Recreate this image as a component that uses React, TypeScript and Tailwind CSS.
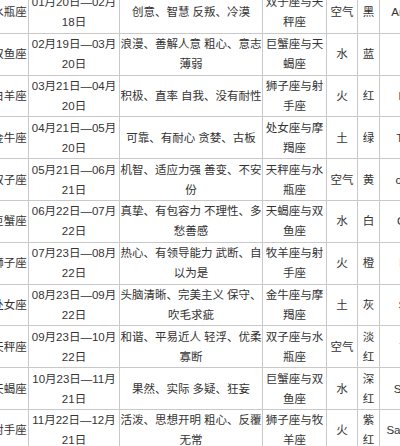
const rows: string[][][] = [
  [["水瓶座"], ["01月20日—02月", "18日"], ["创意、智慧 反叛、冷漠"], ["双子座与天", "秤座"], ["空气"], ["黑"], ["Amethyst Jet"]],
  [["双鱼座"], ["02月19日—03月", "20日"], ["浪漫、善解人意 粗心、意志", "薄弱"], ["巨蟹座与天", "蝎座"], ["水"], ["蓝"], ["Emeralds"]],
  [["白羊座"], ["03月21日—04月", "20日"], ["积极、直率 自我、没有耐性"], ["狮子座与射", "手座"], ["火"], ["红"], ["Diamonds"]],
  [["金牛座"], ["04月21日—05月", "20日"], ["可靠、有耐心 贪婪、古板"], ["处女座与摩", "羯座"], ["土"], ["绿"], ["Turquoises"]],
  [["双子座"], ["05月21日—06月", "21日"], ["机智、适应力强 善变、不安", "份"], ["天秤座与水", "瓶座"], ["空气"], ["黄"], ["chalcedony"]],
  [["巨蟹座"], ["06月22日—07月", "22日"], ["真挚、有包容力 不理性、多", "愁善感"], ["天蝎座与双", "鱼座"], ["水"], ["白"], ["Carnelians"]],
  [["狮子座"], ["07月23日—08月", "22日"], ["热心、有领导能力 武断、自", "以为是"], ["牧羊座与射", "手座"], ["火"], ["橙"], ["Rubellites"]],
  [["处女座"], ["08月23日—09月", "22日"], ["头脑清晰、完美主义 保守、", "吹毛求疵"], ["金牛座与摩", "羯座"], ["土"], ["灰"], ["Sapphires"]],
  [["天秤座"], ["09月23日—10月", "22日"], ["和谐、平易近人 轻浮、优柔", "寡断"], ["双子座与水", "瓶座"], ["空气"], ["淡", "红"], ["Tourmalin"]],
  [["天蝎座"], ["10月23日—11月", "21日"], ["果然、实际 多疑、狂妄"], ["巨蟹座与双", "鱼座"], ["水"], ["深", "红"], ["Serpentines"]],
  [["射手座"], ["11月22日—12月", "21日"], ["活泼、思想开明 粗心、反覆", "无常"], ["狮子座与牧", "羊座"], ["火"], ["紫", "红"], ["Sapphire Onyx"]],
]

const widths = ["w-[38px]", "w-[91px]", "w-[143px]", "w-[64px]", "w-[31px]", "w-[22px]", "w-[90px]"]

export default function App() {
  return (
    <div className="w-[400px] h-[446px] overflow-hidden bg-white">
      <table
        className="table-fixed border-collapse -ml-[10px] -mt-[9px] w-[479px] text-[11.5px] leading-[20px] text-[#333]"
        style={{ fontFamily: '"Liberation Sans", "Noto Sans CJK SC", sans-serif' }}
      >
        <colgroup>
          {widths.map((w, i) => (
            <col key={i} className={w} />
          ))}
        </colgroup>
        <tbody>
          {rows.map((row, r) => (
            <tr key={r} className="h-[41.8px]">
              {row.map((cell, c) => (
                <td
                  key={c}
                  className="border border-[#c9c9c9] p-0 text-center align-middle whitespace-nowrap overflow-hidden"
                >
                  {cell.map((line, k) => (
                    <div key={k}>{line}</div>
                  ))}
                </td>
              ))}
            </tr>
          ))}
        </tbody>
      </table>
    </div>
  )
}
